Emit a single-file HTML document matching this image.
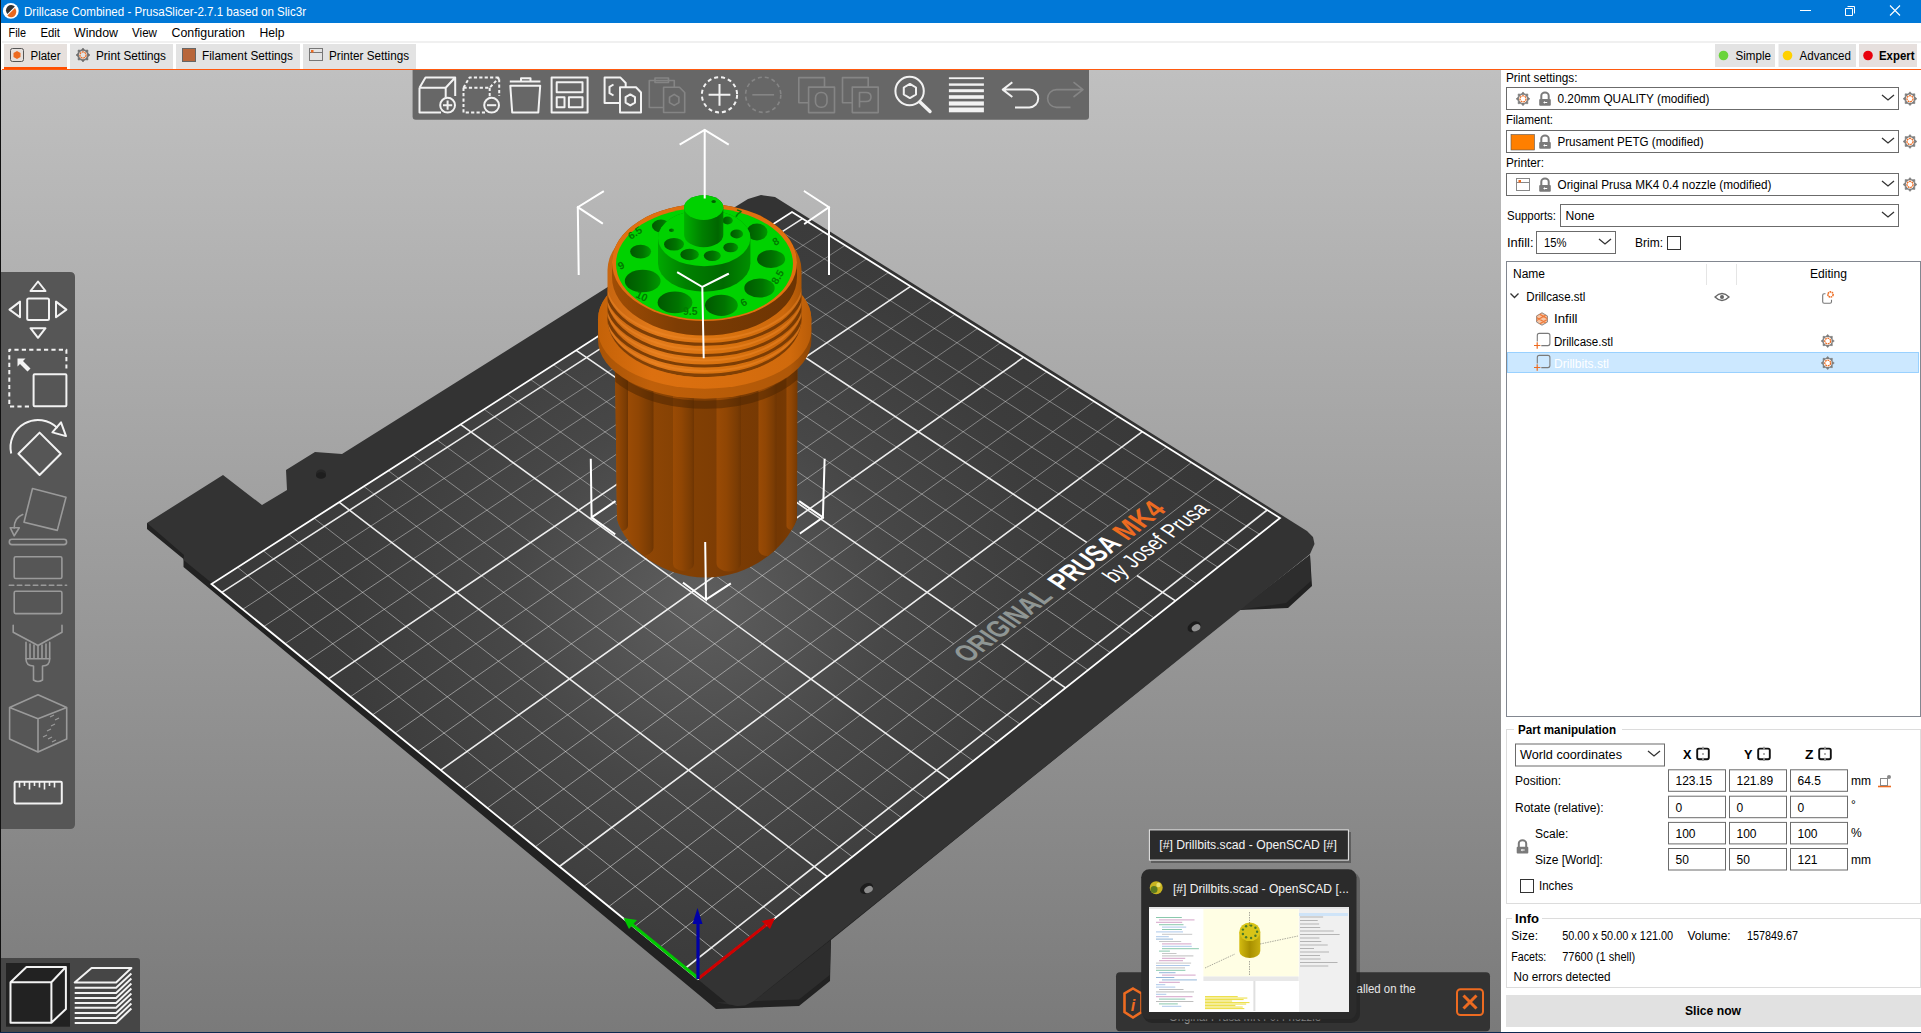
<!DOCTYPE html>
<html><head><meta charset="utf-8"><title>PrusaSlicer</title>
<style>html,body{margin:0;padding:0;overflow:hidden;background:#fff;width:1921px;height:1033px}
svg{display:block;font-family:"Liberation Sans", sans-serif}</style></head>
<body><svg width="1921" height="1033" viewBox="0 0 1921 1033">
<defs><linearGradient id="bgg" x1="0" y1="0" x2="0" y2="1"><stop offset="0" stop-color="#c0c0c0"/><stop offset="1" stop-color="#7a7a7a"/></linearGradient></defs><rect x="0" y="70" width="1501" height="962" fill="url(#bgg)"/>
<polygon points="147.0,523.0 147.0,529.0 183.5,559.0 183.5,567.0 716.0,1009.0 799.0,1006.0 830.0,981.0 831.0,940.0 1239.0,610.0 1288.0,608.0 1312.0,586.0 1310.0,555.0 1200.0,640.0" fill="#222"/>
<polygon points="738.0,1006.0 716.0,1002.5 799.0,999.5 829.7,975.0 830.7,940.0 754.0,1001.0" fill="#2d2d2d"/>
<polygon points="1239.0,610.0 1286.0,603.0 1311.0,581.0 1310.0,555.0" fill="#2d2d2d"/>
<polygon points="147.0,523.0 223.0,475.0 262.0,505.0 287.0,490.0 286.0,470.0 315.0,452.0 342.0,454.0 735.0,207.0 748.0,199.0 761.0,195.0 775.0,197.0 1307.0,531.0 1313.0,537.0 1314.5,544.0 1310.0,554.0 754.0,1001.0 745.0,1005.5 737.0,1006.0 728.0,1004.0 183.5,560.0 184.0,555.0" fill="#333"/>
<ellipse cx="321" cy="473.5" rx="5" ry="4" fill="#262626"/><ellipse cx="321" cy="475.5" rx="5" ry="3.2" fill="#1e1e1e"/>
<ellipse cx="866.5" cy="888.5" rx="7" ry="4.8" transform="rotate(-30 866.5 888.5)" fill="#1c1c1c"/><ellipse cx="868.5" cy="889.5" rx="4.6" ry="3.2" transform="rotate(-30 868.5 889.5)" fill="#8c8c8c"/>
<ellipse cx="1194" cy="626.8" rx="7" ry="4.8" transform="rotate(-30 1194 626.8)" fill="#1c1c1c"/><ellipse cx="1196" cy="627.8" rx="4.6" ry="3.2" transform="rotate(-30 1196 627.8)" fill="#929292"/>
<defs><radialGradient id="sheet" gradientUnits="userSpaceOnUse" cx="700" cy="600" r="640"><stop offset="0" stop-color="#5e5e5e"/><stop offset="0.12" stop-color="#555555"/><stop offset="0.3" stop-color="#474747"/><stop offset="0.55" stop-color="#3c3c3c"/><stop offset="1" stop-color="#353535"/></radialGradient></defs>
<polygon points="698.0,979.0 1280.0,518.0 792.0,212.0 211.5,584.0" fill="url(#sheet)"/>
<defs><linearGradient id="thinG" gradientUnits="userSpaceOnUse" x1="0" y1="200" x2="0" y2="980"><stop offset="0" stop-color="#fff" stop-opacity="0.3"/><stop offset="0.5" stop-color="#fff" stop-opacity="0.42"/><stop offset="1" stop-color="#fff" stop-opacity="0.5"/></linearGradient></defs>
<path d="M724.4 958.1L237.5 567.3M750.6 937.3L263.3 550.8M776.4 916.9L288.8 534.5M802.0 896.6L314.1 518.3M852.3 856.8L363.8 486.4M877.0 837.2L388.4 470.7M901.5 817.8L412.7 455.1M925.7 798.7L436.7 439.7M973.3 760.9L484.1 409.3M996.7 742.4L507.5 394.3M1019.9 724.0L530.6 379.5M1042.8 705.9L978.8 661.3M953.7 643.8L553.5 364.8M1088.0 670.1L1024.1 626.4M999.0 609.3L598.7 335.9M1110.2 652.5L1046.3 609.3M1021.2 592.3L621.0 321.6M1132.2 635.1L1068.3 592.3M1043.3 575.5L643.1 307.4M1154.0 617.8L1115.5 592.3M1065.1 558.9L664.9 293.4M1196.8 583.9L1158.4 558.9M1108.1 526.1L708.1 265.8M1217.9 567.2L1179.5 542.4M1129.3 510.0L729.3 252.2M1238.8 550.6L1200.5 526.1M1150.2 494.0L750.4 238.7M1259.5 534.2L771.3 225.3M659.3 947.6L1241.7 494.0M633.9 927.0L1216.5 478.2M608.8 906.6L1191.5 462.5M584.0 886.4L1166.8 447.0M535.2 846.8L1118.2 416.5M511.2 827.3L1094.2 401.5M487.4 808.0L1070.4 386.6M464.0 789.0L1046.9 371.8M417.8 751.5L1000.5 342.8M395.1 733.0L977.7 328.4M372.6 714.8L955.1 314.3M350.4 696.7L932.7 300.2M306.6 661.2L888.5 272.5M285.1 643.7L866.7 258.8M263.8 626.5L845.1 245.3M242.7 609.3L823.7 231.9" stroke="url(#thinG)" stroke-width="1" fill="none"/>
<path d="M827.3 876.6L339.1 502.2M949.6 779.7L460.5 424.4M1065.5 687.9L1001.6 643.8M976.5 626.4L576.2 350.3M1175.5 600.8L1137.0 575.5M1086.7 542.4L686.6 279.5M685.0 968.5L1267.2 510.0M559.4 866.5L1142.4 431.7M440.7 770.1L1023.6 357.2M328.4 678.9L910.5 286.3M221.8 592.4L802.5 218.6" stroke="#fff" stroke-opacity="0.9" stroke-width="1.6" fill="none"/>
<polygon points="698.0,979.0 1280.0,518.0 792.0,212.0 211.5,584.0" fill="none" stroke="#fff" stroke-width="1.8"/>
<g transform="matrix(2.1798 -1.6793 2.5184 1.6787 1079.27 583.90)" font-family="&quot;Liberation Sans&quot;, sans-serif">
<text x="-49.19999999999999" y="-1.6000000000000014" font-size="9.6" font-weight="bold" fill="#8f9694" textLength="39.5" lengthAdjust="spacingAndGlyphs">ORIGINAL</text>
<text x="-6" y="-1.6000000000000014" font-size="9.6" font-weight="bold" fill="#fff" textLength="27.8" lengthAdjust="spacingAndGlyphs">PRUSA</text>
<text x="23.80000000000001" y="-1.6000000000000014" font-size="9.6" font-weight="bold" fill="#ed6b21" textLength="18.4" lengthAdjust="spacingAndGlyphs">MK4</text>
<text x="7.599999999999994" y="7.399999999999999" font-size="7.9" fill="#fff" textLength="44" lengthAdjust="spacingAndGlyphs">by Josef Prusa</text>
</g>
<defs>
<linearGradient id="gBody" gradientUnits="userSpaceOnUse" x1="614" y1="0" x2="798" y2="0"><stop offset="0" stop-color="#a35106"/><stop offset="0.12" stop-color="#934805"/><stop offset="0.35" stop-color="#844104"/><stop offset="0.6" stop-color="#7c3c04"/><stop offset="0.9" stop-color="#743803"/><stop offset="1" stop-color="#7c3c04"/></linearGradient>
<linearGradient id="gFlute" x1="0" y1="0" x2="1" y2="0"><stop offset="0" stop-color="#9a4b05"/><stop offset="0.4" stop-color="#904604"/><stop offset="0.85" stop-color="#7a3c04"/><stop offset="1" stop-color="#6e3503"/></linearGradient>
<linearGradient id="gCollar" gradientUnits="userSpaceOnUse" x1="598" y1="0" x2="812" y2="0"><stop offset="0" stop-color="#c46208"/><stop offset="0.25" stop-color="#dc7010"/><stop offset="0.6" stop-color="#d86e0e"/><stop offset="0.9" stop-color="#d06a0c"/><stop offset="1" stop-color="#b85c08"/></linearGradient>
<linearGradient id="gCollarS" gradientUnits="userSpaceOnUse" x1="598" y1="0" x2="812" y2="0"><stop offset="0" stop-color="#a85306"/><stop offset="0.25" stop-color="#c0600a"/><stop offset="0.6" stop-color="#b85c08"/><stop offset="0.9" stop-color="#b05808"/><stop offset="1" stop-color="#8a4405"/></linearGradient>
<linearGradient id="gThread" gradientUnits="userSpaceOnUse" x1="607" y1="0" x2="803" y2="0"><stop offset="0" stop-color="#c86610"/><stop offset="0.25" stop-color="#e27a1a"/><stop offset="0.6" stop-color="#d9730f"/><stop offset="0.9" stop-color="#cc680c"/><stop offset="1" stop-color="#a85406"/></linearGradient>
<linearGradient id="gWall" gradientUnits="userSpaceOnUse" x1="612" y1="0" x2="797" y2="0"><stop offset="0" stop-color="#a04d05"/><stop offset="0.35" stop-color="#7e3d04"/><stop offset="1" stop-color="#6c3403"/></linearGradient>
<linearGradient id="gHub" gradientUnits="userSpaceOnUse" x1="658" y1="0" x2="751" y2="0"><stop offset="0" stop-color="#00a800"/><stop offset="0.3" stop-color="#008000"/><stop offset="0.7" stop-color="#006a00"/><stop offset="1" stop-color="#009000"/></linearGradient>
<linearGradient id="gPin" gradientUnits="userSpaceOnUse" x1="684" y1="0" x2="724" y2="0"><stop offset="0" stop-color="#00b000"/><stop offset="0.45" stop-color="#008000"/><stop offset="0.85" stop-color="#006600"/><stop offset="1" stop-color="#008000"/></linearGradient>
<linearGradient id="gHoleB" x1="0" y1="0" x2="1" y2="0"><stop offset="0" stop-color="#005800"/><stop offset="0.6" stop-color="#007400"/><stop offset="1" stop-color="#009a00"/></linearGradient>
<clipPath id="cThread"><path d="M607.5 270.0 L607.5 319.3 A97 58 0 0 0 801.5 319.3 L801.5 270.0 A97 58 0 0 0 607.5 270.0 Z"/></clipPath>
<clipPath id="cBody"><path d="M614.7 330 L617 519 C625 548 662 577.5 705.5 577.5 C750 577.5 786 548 797 519 L797.4 330 Z"/></clipPath>
</defs>
<path d="M614.7 330 L617 519 C625 548 662 577.5 705.5 577.5 C750 577.5 786 548 797 519 L797.4 330 Z" fill="url(#gBody)"/>
<g clip-path="url(#cBody)">
<rect x="613" y="300" width="15" height="231" rx="7.5" ry="5.2" fill="url(#gFlute)"/>
<rect x="628.5" y="300" width="25.0" height="256" rx="12.5" ry="8.8" fill="url(#gFlute)"/>
<rect x="673" y="300" width="21" height="271" rx="10.5" ry="7.3" fill="url(#gFlute)"/>
<rect x="716.5" y="300" width="24.5" height="271.5" rx="12.2" ry="8.6" fill="url(#gFlute)"/>
<rect x="758.5" y="300" width="18.0" height="256" rx="9.0" ry="6.3" fill="url(#gFlute)"/>
<rect x="786.5" y="300" width="11.5" height="230" rx="5.8" ry="4.0" fill="url(#gFlute)"/>
</g>
<g clip-path="url(#cBody)"><path d="M600 346 A105 58.7 0 0 0 810 346" stroke="#4a2402" stroke-width="8" fill="none" stroke-opacity="0.5"/></g>
<path d="M598.0 330.0 L598.0 340.0 A106.7 58.7 0 0 0 811.4 340.0 L811.4 330.0 A106.7 58.7 0 0 0 598.0 330.0 Z" fill="url(#gCollarS)"/>
<path d="M598.0 319.3 L598.0 330.0 A106.7 58.7 0 0 0 811.4 330.0 L811.4 319.3 A106.7 58.7 0 0 0 598.0 319.3 Z" fill="url(#gCollar)"/>
<ellipse cx="704.7" cy="319.3" rx="106.7" ry="58.7" fill="url(#gCollar)"/>
<path d="M607.5 270.0 L607.5 319.3 A97 58 0 0 0 801.5 319.3 L801.5 270.0 A97 58 0 0 0 607.5 270.0 Z" fill="url(#gThread)"/>
<g clip-path="url(#cThread)" fill="none">
<path d="M605.5 317.5 A99 58 0 0 0 803.5 317.5" stroke="#6a3303" stroke-width="3.6" stroke-opacity="0.8"/>
<path d="M605.5 286.4 A99 58 0 0 0 803.5 286.4" stroke="#723703" stroke-width="3" stroke-opacity="0.9"/>
<path d="M605.5 297.5 A99 58 0 0 0 803.5 297.5" stroke="#723703" stroke-width="3" stroke-opacity="0.9"/>
<path d="M605.5 308.0 A99 58 0 0 0 803.5 308.0" stroke="#723703" stroke-width="3" stroke-opacity="0.9"/>
<path d="M605.5 281.5 A99 58 0 0 0 803.5 281.5" stroke="#f08a2a" stroke-width="2" stroke-opacity="0.45"/>
<path d="M605.5 292.0 A99 58 0 0 0 803.5 292.0" stroke="#f08a2a" stroke-width="2" stroke-opacity="0.45"/>
<path d="M605.5 302.5 A99 58 0 0 0 803.5 302.5" stroke="#f08a2a" stroke-width="2" stroke-opacity="0.45"/>
<path d="M605.5 313.0 A99 58 0 0 0 803.5 313.0" stroke="#f08a2a" stroke-width="2" stroke-opacity="0.45"/>
</g>
<path d="M612.0 262.5 L612.0 277.0 A92.5 58.5 0 0 0 797.0 277.0 L797.0 262.5 A92.5 58.5 0 0 0 612.0 262.5 Z" fill="url(#gWall)"/>
<ellipse cx="704.5" cy="262.5" rx="92.5" ry="58.5" fill="#e07010"/>
<ellipse cx="704.5" cy="263.8" rx="88.5" ry="55.8" fill="#00d200"/>
<ellipse cx="640.6" cy="251.6" rx="10.5" ry="6.8" fill="url(#gHoleB)"/>
<ellipse cx="642.7" cy="281" rx="17.9" ry="11.3" fill="url(#gHoleB)"/>
<ellipse cx="675" cy="302.4" rx="17.4" ry="10.9" fill="url(#gHoleB)"/>
<ellipse cx="721.4" cy="305.3" rx="16.4" ry="10.6" fill="url(#gHoleB)"/>
<ellipse cx="759.5" cy="288" rx="15.2" ry="9.6" fill="url(#gHoleB)"/>
<ellipse cx="771.1" cy="259" rx="14.1" ry="9" fill="url(#gHoleB)"/>
<ellipse cx="757" cy="232" rx="10.5" ry="8.5" fill="url(#gHoleB)"/>
<ellipse cx="661" cy="226" rx="9" ry="6.5" fill="url(#gHoleB)"/>
<ellipse cx="712" cy="215" rx="8" ry="5" fill="url(#gHoleB)"/>
<path d="M658.0 238.0 L658.0 263.5 A46.2 28.2 0 0 0 750.4 263.5 L750.4 238.0 A46.2 28.2 0 0 0 658.0 238.0 Z" fill="url(#gHub)"/>
<ellipse cx="704.2" cy="238" rx="46.2" ry="28.2" fill="#00d200"/>
<ellipse cx="674" cy="244.3" rx="10" ry="6.3" fill="url(#gHoleB)"/>
<ellipse cx="689.6" cy="254.5" rx="9.3" ry="5.7" fill="url(#gHoleB)"/>
<ellipse cx="712.3" cy="255.8" rx="8.5" ry="5.2" fill="url(#gHoleB)"/>
<ellipse cx="730.7" cy="247.5" rx="7.4" ry="4.8" fill="url(#gHoleB)"/>
<ellipse cx="736.7" cy="233.9" rx="6.4" ry="4.5" fill="url(#gHoleB)"/>
<ellipse cx="727.6" cy="220.5" rx="5.2" ry="3.9" fill="url(#gHoleB)"/>
<ellipse cx="671.6" cy="230.2" rx="2.6" ry="1.8" fill="url(#gHoleB)"/>
<path d="M684.1 207.6 L684.1 234.8 A19.6 12.4 0 0 0 723.3 234.8 L723.3 207.6 A19.6 12.4 0 0 0 684.1 207.6 Z" fill="url(#gPin)"/>
<ellipse cx="703.7" cy="207.6" rx="19.6" ry="12.4" fill="#00d200"/>
<ellipse cx="713.7" cy="201.5" rx="2.2" ry="1.5" fill="#006000"/>
<g font-size="10.5" font-weight="bold" fill="#007a00"><text x="631" y="240" transform="rotate(-35 631 240)">6.5</text><text x="620" y="270" transform="rotate(-25 620 270)">9</text><text x="635" y="297" transform="rotate(25 635 297)">10</text><text x="683" y="315">9.5</text><text x="743" y="307" transform="rotate(-30 743 307)">6</text><text x="777" y="285" transform="rotate(-60 777 285)">8.5</text><text x="775" y="246" transform="rotate(-30 775 246)">8</text><text x="734" y="216" transform="rotate(20 734 216)">7</text></g>
<path d="M704.7 197.5V130 M680.5 144.2L704.7 130L727.9 144.2 M578.7 274L577.8 207.2L603 191.7 M577.8 207.2L602 223.2 M829 274V207.2L804.8 191.5 M829 207.2L805 223.5 M703.7 357.3L702.3 287L678 272.6 M702.3 287L728 274 M590.8 459.8L591.6 517.4L614.7 501.7 M591.6 517.4L614.4 533.8 M824.6 459.8L822.9 517.4L799.9 501.7 M822.9 517.4L800.7 533 M705.2 542.9L706 599.7L683.8 583.2 M706 599.7L730 584" stroke="#fff" stroke-width="2" fill="none" stroke-linecap="square"/>
<path d="M698.5 978.5L632 924.5" stroke="#00c800" stroke-width="3"/><polygon points="623.5,918 637,920 629,929" fill="#00c800"/>
<path d="M698.5 978.5L766 925" stroke="#d00000" stroke-width="3"/><polygon points="775,918 770,929 761.5,921" fill="#d00000"/>
<path d="M698 979V920" stroke="#0000a8" stroke-width="3.2"/><polygon points="697.5,908 702.5,924 692.5,924" fill="#0000a8"/>
<path d="M412.6 70 H1089 V116.5 Q1089 119.7 1085.8 119.7 H415.8 Q412.6 119.7 412.6 116.5 Z" fill="#676767"/>
<path d="M419.5 87.7 V112.5 H441 M419.5 87.7 L425.5 77.5 H455.2 V96 M419.5 87.7 H445.7 L455.2 77.5 M445.7 87.7 V97" fill="none" stroke="#f2f2f2" stroke-width="2" stroke-linejoin="round"/>
<circle cx="447.6" cy="105.2" r="7.4" fill="none" stroke="#f2f2f2" stroke-width="2" stroke-linejoin="round"/><path d="M443 105.2h9.2 M447.6 100.6v9.2" fill="none" stroke="#f2f2f2" stroke-width="2" stroke-linejoin="round"/>
<path d="M463.5 87.7 V112.5 H485 M463.5 87.7 L469.5 77.5 H499.2 V96 M463.5 87.7 H489.7 L499.2 77.5 M489.7 87.7 V97" fill="none" stroke="#f2f2f2" stroke-width="2" stroke-linejoin="round" stroke-dasharray="3.2 2.2"/>
<circle cx="491.6" cy="105.2" r="7.4" fill="none" stroke="#f2f2f2" stroke-width="2" stroke-linejoin="round"/><path d="M487 105.2h9.2" fill="none" stroke="#f2f2f2" stroke-width="2" stroke-linejoin="round"/>
<path d="M510.3 85.7 L512.2 112.5 H538.3 L540.2 85.7 Z M509.8 81.5 H540.4 M521 81 V78.3 H530.5 V81" fill="none" stroke="#f2f2f2" stroke-width="2" stroke-linejoin="round"/>
<rect x="551.6" y="77.6" width="36" height="34.8" fill="none" stroke="#f2f2f2" stroke-width="2" stroke-linejoin="round"/><rect x="556.7" y="82.3" width="25.8" height="10" fill="none" stroke="#f2f2f2" stroke-width="2" stroke-linejoin="round"/><rect x="556.7" y="97.3" width="7.8" height="10" fill="none" stroke="#f2f2f2" stroke-width="2" stroke-linejoin="round"/><rect x="568.9" y="97.3" width="13.6" height="10" fill="none" stroke="#f2f2f2" stroke-width="2" stroke-linejoin="round"/>
<path d="M620 103 H604.6 V77.6 H620.5 L625.7 83 V88" fill="none" stroke="#f2f2f2" stroke-width="2" stroke-linejoin="round"/><path d="M620 87.2 H636 L641 92.5 V112.5 H620 Z" fill="none" stroke="#f2f2f2" stroke-width="2" stroke-linejoin="round"/><path d="M613.5 84.5 L609.5 86.8 V93.2 L613.5 95.5" fill="none" stroke="#f2f2f2" stroke-width="2" stroke-linejoin="round"/><polygon points="630.3,94.4 635,97.2 635,102.6 630.3,105.4 625.6,102.6 625.6,97.2" fill="none" stroke="#f2f2f2" stroke-width="2" stroke-linejoin="round"/>
<path d="M663.5 107.5 H649.3 V80.5 H674.3 V87 M655 78 H668.5 V82.5 H655 Z" fill="none" stroke="#858585" stroke-width="1.6" stroke-linejoin="round"/><path d="M663.6 87.2 H679.5 L684.7 92.5 V112.5 H663.6 Z" fill="none" stroke="#858585" stroke-width="1.6" stroke-linejoin="round"/><polygon points="674.2,94.4 678.9,97.2 678.9,102.6 674.2,105.4 669.5,102.6 669.5,97.2" fill="none" stroke="#858585" stroke-width="1.6" stroke-linejoin="round"/>
<circle cx="719.5" cy="94.8" r="17.6" fill="none" stroke="#f2f2f2" stroke-width="2" stroke-linejoin="round" stroke-dasharray="4 3"/><path d="M708.6 94.8h21.8 M719.5 83.9v21.8" fill="none" stroke="#f2f2f2" stroke-width="2" stroke-linejoin="round"/>
<circle cx="763.2" cy="94.8" r="17.6" fill="none" stroke="#858585" stroke-width="1.6" stroke-linejoin="round" stroke-dasharray="4 3"/><path d="M752.3 94.8h21.8" fill="none" stroke="#858585" stroke-width="1.6" stroke-linejoin="round"/>
<path d="M808.5999999999999 102.8 H798.8 V77.6 H824.5 V87" fill="none" stroke="#858585" stroke-width="1.6" stroke-linejoin="round"/><rect x="808.5999999999999" y="87.1" width="25.9" height="25.5" fill="none" stroke="#858585" stroke-width="1.6" stroke-linejoin="round"/>
<path d="M852.3 102.8 H842.5 V77.6 H868.2 V87" fill="none" stroke="#858585" stroke-width="1.6" stroke-linejoin="round"/><rect x="852.3" y="87.1" width="25.9" height="25.5" fill="none" stroke="#858585" stroke-width="1.6" stroke-linejoin="round"/>
<rect x="815.5" y="92.5" width="11.5" height="14.8" rx="5.2" fill="none" stroke="#858585" stroke-width="1.6" stroke-linejoin="round"/>
<path d="M859.5 107.5 V92.5 H866 Q871 92.5 871 97 Q871 101.5 866 101.5 H859.5" fill="none" stroke="#858585" stroke-width="1.6" stroke-linejoin="round"/>
<circle cx="909.6" cy="91" r="14.2" fill="none" stroke="#f2f2f2" stroke-width="2" stroke-linejoin="round"/><polygon points="909.9,83.9 916,87.5 916,94.5 909.9,98.1 903.8,94.5 903.8,87.5" fill="none" stroke="#f2f2f2" stroke-width="2" stroke-linejoin="round"/><path d="M920 101.9 L930 111.5" stroke="#f2f2f2" stroke-width="3.4" stroke-linecap="round"/>
<rect x="948.9" y="77.30" width="35" height="1.8" fill="#f2f2f2"/>
<rect x="948.9" y="83.40" width="35" height="2.4" fill="#f2f2f2"/>
<rect x="948.9" y="89.20" width="35" height="3" fill="#f2f2f2"/>
<rect x="948.9" y="95.20" width="35" height="3.6" fill="#f2f2f2"/>
<rect x="948.9" y="101.40" width="35" height="4.2" fill="#f2f2f2"/>
<rect x="948.9" y="107.50" width="35" height="4.8" fill="#f2f2f2"/>
<path d="M1012.3 82.2 L1002.8 89.6 L1012.3 97 M1002.8 89.6 H1029.3 A8.9 8.9 0 0 1 1029.3 107.4 H1015" fill="none" stroke="#f2f2f2" stroke-width="2" stroke-linejoin="round"/>
<path d="M1073.5 82.2 L1083 89.6 L1073.5 97 M1083 89.6 H1056.5 A8.9 8.9 0 0 0 1056.5 107.4 H1070.5" fill="none" stroke="#858585" stroke-width="1.6" stroke-linejoin="round"/>
<path d="M1 272 H70 Q75 272 75 277 V824 Q75 829 70 829 H1 Z" fill="#565656"/>
<polygon points="38,281.5 45.5,291 30.5,291" fill="none" stroke="#f2f2f2" stroke-width="2" stroke-linejoin="round"/><polygon points="38,337.8 45.5,328.2 30.5,328.2" fill="none" stroke="#f2f2f2" stroke-width="2" stroke-linejoin="round"/><polygon points="9.5,309.6 20,301.6 20,317.2" fill="none" stroke="#f2f2f2" stroke-width="2" stroke-linejoin="round"/><polygon points="66.4,309.6 56,301.6 56,317.2" fill="none" stroke="#f2f2f2" stroke-width="2" stroke-linejoin="round"/><rect x="27.2" y="298.6" width="21.8" height="21.4" rx="1.5" fill="none" stroke="#f2f2f2" stroke-width="2" stroke-linejoin="round"/>
<path d="M29 406.4 H9.3 V349.8 H66.4 V369" fill="none" stroke="#f2f2f2" stroke-width="2" stroke-linejoin="round" stroke-dasharray="4.2 3.2"/><rect x="33.6" y="374.3" width="32.8" height="32" rx="1" fill="none" stroke="#f2f2f2" stroke-width="2" stroke-linejoin="round"/><path d="M17.5 358.5 H25.5 L23 361 L30.5 368.5 L27.5 371.5 L20 364 L17.5 366.5 Z" fill="#f2f2f2"/>
<polygon points="39.6,432.6 60.8,453.8 39.6,475 18.4,453.8" fill="none" stroke="#f2f2f2" stroke-width="2" stroke-linejoin="round"/><path d="M11.2 453.5 A27.5 27.5 0 0 1 57.5 428" fill="none" stroke="#f2f2f2" stroke-width="2" stroke-linejoin="round"/><polygon points="61,422.3 66,436.1 52.4,432.4" fill="none" stroke="#f2f2f2" stroke-width="2" stroke-linejoin="round"/>
<polygon points="32.5,488.5 66,497.3 57.3,530.4 24,522.2" fill="none" stroke="#9a9a9a" stroke-width="1.6" stroke-linejoin="round" stroke-linecap="round"/><path d="M22.7 514.5 Q14 518 14.2 528" fill="none" stroke="#9a9a9a" stroke-width="1.6" stroke-linejoin="round" stroke-linecap="round"/><polygon points="10.2,527.7 19.3,527.7 14.2,535.8" fill="none" stroke="#9a9a9a" stroke-width="1.6" stroke-linejoin="round" stroke-linecap="round"/><rect x="9.3" y="539.3" width="57.3" height="5.3" rx="2.6" fill="none" stroke="#9a9a9a" stroke-width="1.6" stroke-linejoin="round" stroke-linecap="round"/>
<rect x="14.2" y="556.8" width="47.7" height="21.7" rx="1.5" fill="none" stroke="#9a9a9a" stroke-width="1.6" stroke-linejoin="round" stroke-linecap="round"/><path d="M9.3 585.2 H66.6" fill="none" stroke="#9a9a9a" stroke-width="1.6" stroke-linejoin="round" stroke-linecap="round" stroke-dasharray="4.5 3.5"/><rect x="14.2" y="591.3" width="47.7" height="22.3" rx="1.5" fill="none" stroke="#9a9a9a" stroke-width="1.6" stroke-linejoin="round" stroke-linecap="round"/>
<path d="M13.2 625.2 V632.3 L38 645.5 L62 632.3 V625.2" fill="none" stroke="#9a9a9a" stroke-width="1.6" stroke-linejoin="round" stroke-linecap="round"/><path d="M26 642.4 V658.7 H49.7 V642.4 M30 644 V658 M34 645 V658 M38 646 V658 M42 645 V658 M46 644 V658" fill="none" stroke="#9a9a9a" stroke-width="1.6" stroke-linejoin="round" stroke-linecap="round"/><path d="M26 658.7 Q26 666 33.5 666 V680 Q38 683 42.5 680 V666 Q49.7 666 49.7 658.7" fill="none" stroke="#9a9a9a" stroke-width="1.6" stroke-linejoin="round" stroke-linecap="round"/>
<path d="M38 694.7 L66.7 707.6 V738.9 L38 752.1 L9.6 738.9 V707.6 Z M9.6 707.6 L38 718.8 L66.7 707.6 M38 718.8 V752.1" fill="none" stroke="#9a9a9a" stroke-width="1.6" stroke-linejoin="round" stroke-linecap="round"/><path d="M50 717 l4 -2 M55 720 l4 -2 M51 726 l4 -2 M47 731 l4 -2 M43 737 l4 -2 M48 739 l4 -2 M52 742 l4 -2" stroke="#9a9a9a" stroke-width="1.2"/>
<rect x="14.6" y="781.8" width="47.2" height="21.8" rx="1" fill="none" stroke="#f2f2f2" stroke-width="2" stroke-linejoin="round"/><path d="M19.5 782v5.5 M24.5 782v4 M29.5 782v7.5 M34.5 782v4 M39.5 782v5.5 M44.5 782v7.5 M49.5 782v4 M54.5 782v5.5" stroke="#f2f2f2" stroke-width="1.6"/>
<path d="M1 958 H137 Q140 958 140 961 V1032 H1 Z" fill="#464646"/>
<rect x="6" y="963" width="64" height="63.7" fill="#222"/>
<path d="M10.5 982.2 H51.4 V1022.7 H10.5 Z M10.5 982.2 L26.5 967 H65.9 V1009 L51.4 1022.7 M51.4 982.2 L65.9 967" fill="none" stroke="#f2f2f2" stroke-width="2" stroke-linejoin="round"/>
<path d="M74.7 982.5 L91.6 968.1 H131.4 L116.1 982.5 Z" fill="none" stroke="#f2f2f2" stroke-width="2" stroke-linejoin="round"/>
<path d="M74.7 987.8 H116.1 L131.4 973.4 M74.7 993 H116.1 L131.4 978.6 M74.7 998 H116.1 L131.4 983.6 M74.7 1003 H116.1 L131.4 988.6 M74.7 1007.8 H116.1 L131.4 993.4 M74.7 1012.9 H116.1 L131.4 998.5 M74.7 1017.9 H116.1 L131.4 1003.5 M74.7 1023 H116.1 L131.4 1008.6 " fill="none" stroke="#f2f2f2" stroke-width="2" stroke-linejoin="round"/>
<rect x="1116" y="972.2" width="374" height="59" rx="4" fill="#333"/>
<polygon points="1133,988.5 1141.5,993.5 1141.5,1012 1133,1017.5 1124.5,1012 1124.5,993.5" fill="none" stroke="#ed6b21" stroke-width="2.6"/><text x="1133" y="1011" font-size="16" font-weight="bold" font-style="italic" fill="#ed6b21" text-anchor="middle">i</text>
<text x="1356.6" y="993" font-size="13" fill="#e6e6e6" font-weight="normal" text-anchor="start" textLength="59" lengthAdjust="spacingAndGlyphs" >alled on the</text>
<text x="1169" y="1021" font-size="13" fill="#a8a8a8" font-weight="normal" text-anchor="start" textLength="152" lengthAdjust="spacingAndGlyphs" >Original Prusa MK4 0.4 nozzle</text>
<rect x="1457" y="989.2" width="26" height="25.8" rx="3.5" fill="none" stroke="#ed6b21" stroke-width="2"/><path d="M1463.5 995.5l13 13 M1476.5 995.5l-13 13" stroke="#ed6b21" stroke-width="3"/>
<rect x="1143" y="872" width="217" height="151" rx="9" fill="#000" opacity="0.25"/>
<rect x="1141.2" y="869.3" width="215.3" height="150" rx="8" fill="#2b2b2b"/>
<circle cx="1156.2" cy="887.7" r="6.5" fill="#c8b420"/><circle cx="1154" cy="889.5" r="3.5" fill="#5a7a20"/><circle cx="1158.5" cy="885" r="2.2" fill="#e8e070"/>
<text x="1172.9" y="892.5" font-size="12" fill="#f4f4f4" font-weight="normal" text-anchor="start" textLength="176" lengthAdjust="spacingAndGlyphs" >[#] Drillbits.scad - OpenSCAD [...</text>
<rect x="1149" y="907" width="200" height="105" fill="#fff"/>
<rect x="1149" y="907" width="200" height="2" fill="#e6e6e6"/>
<rect x="1203.4" y="909" width="95.3" height="67.5" fill="#fffee4"/>
<rect x="1203.4" y="976.5" width="95.3" height="4.5" fill="#e8e8e8"/>
<rect x="1299" y="909" width="50" height="103" fill="#f0f0f0"/>
<rect x="1253.4" y="981" width="2" height="30" fill="#e0e0e0"/>
<rect x="1156.0" y="917.0" width="25.8" height="1" fill="#2a9a6a" opacity="0.55"/><rect x="1159.0" y="919.4" width="35.5" height="1" fill="#b05a9a" opacity="0.55"/><rect x="1156.0" y="921.8" width="26.2" height="1" fill="#b05a9a" opacity="0.55"/><rect x="1159.0" y="924.2" width="24.5" height="1" fill="#2a9a6a" opacity="0.55"/><rect x="1162.0" y="926.6" width="24.2" height="1" fill="#6a9ad8" opacity="0.55"/><rect x="1162.0" y="929.0" width="19.9" height="1" fill="#2a9a6a" opacity="0.55"/><rect x="1156.0" y="931.4" width="27.0" height="1" fill="#6a9ad8" opacity="0.55"/><rect x="1162.0" y="933.8" width="30.2" height="1" fill="#999" opacity="0.55"/><rect x="1156.0" y="936.2" width="12.8" height="1" fill="#6a9ad8" opacity="0.55"/><rect x="1156.0" y="938.6" width="17.0" height="1" fill="#3a7ab8" opacity="0.55"/><rect x="1159.0" y="941.0" width="22.2" height="1" fill="#999" opacity="0.55"/><rect x="1162.0" y="943.4" width="29.4" height="1" fill="#b05a9a" opacity="0.55"/><rect x="1162.0" y="945.8" width="29.8" height="1" fill="#6a9ad8" opacity="0.55"/><rect x="1162.0" y="948.2" width="36.9" height="1" fill="#2a9a6a" opacity="0.55"/><rect x="1159.0" y="950.6" width="10.9" height="1" fill="#2a9a6a" opacity="0.55"/><rect x="1162.0" y="953.0" width="14.5" height="1" fill="#999" opacity="0.55"/><rect x="1162.0" y="955.4" width="31.4" height="1" fill="#888" opacity="0.55"/><rect x="1162.0" y="957.8" width="23.2" height="1" fill="#b05a9a" opacity="0.55"/><rect x="1159.0" y="960.2" width="24.0" height="1" fill="#b05a9a" opacity="0.55"/><rect x="1156.0" y="962.6" width="35.1" height="1" fill="#999" opacity="0.55"/><rect x="1156.0" y="965.0" width="33.7" height="1" fill="#6a9ad8" opacity="0.55"/><rect x="1156.0" y="967.4" width="29.0" height="1" fill="#888" opacity="0.55"/><rect x="1156.0" y="969.8" width="29.4" height="1" fill="#2a9a6a" opacity="0.55"/><rect x="1159.0" y="972.2" width="16.5" height="1" fill="#3a7ab8" opacity="0.55"/><rect x="1162.0" y="974.6" width="33.6" height="1" fill="#b05a9a" opacity="0.55"/><rect x="1156.0" y="977.0" width="18.3" height="1" fill="#3a7ab8" opacity="0.55"/><rect x="1162.0" y="979.4" width="34.9" height="1" fill="#3a7ab8" opacity="0.55"/><rect x="1159.0" y="981.8" width="20.8" height="1" fill="#b05a9a" opacity="0.55"/><rect x="1156.0" y="984.2" width="9.3" height="1" fill="#6a9ad8" opacity="0.55"/><rect x="1156.0" y="986.6" width="19.3" height="1" fill="#6a9ad8" opacity="0.55"/><rect x="1159.0" y="989.0" width="24.5" height="1" fill="#888" opacity="0.55"/><rect x="1156.0" y="991.4" width="38.0" height="1" fill="#888" opacity="0.55"/><rect x="1156.0" y="993.8" width="10.3" height="1" fill="#6a9ad8" opacity="0.55"/><rect x="1156.0" y="996.2" width="36.5" height="1" fill="#b05a9a" opacity="0.55"/><rect x="1159.0" y="998.6" width="26.3" height="1" fill="#2a9a6a" opacity="0.55"/><rect x="1156.0" y="1001.0" width="37.4" height="1" fill="#888" opacity="0.55"/><rect x="1159.0" y="1003.4" width="18.8" height="1" fill="#2a9a6a" opacity="0.55"/><rect x="1162.0" y="1005.8" width="19.3" height="1" fill="#6a9ad8" opacity="0.55"/>
<rect x="1205" y="996.0" width="32.7" height="1.1" fill="#e8d820" opacity="0.8"/>
<rect x="1205" y="997.5" width="42.3" height="1.1" fill="#e8d820" opacity="0.8"/>
<rect x="1205" y="999.0" width="38.6" height="1.1" fill="#e8d820" opacity="0.8"/>
<rect x="1205" y="1000.5" width="27.1" height="1.1" fill="#e8d820" opacity="0.8"/>
<rect x="1205" y="1002.0" width="44.5" height="1.1" fill="#e8d820" opacity="0.8"/>
<rect x="1205" y="1003.5" width="41.2" height="1.1" fill="#e8d820" opacity="0.8"/>
<rect x="1205" y="1005.0" width="30.4" height="1.1" fill="#e8d820" opacity="0.8"/>
<rect x="1205" y="1006.5" width="37.7" height="1.1" fill="#e8d820" opacity="0.8"/>
<rect x="1205" y="1008.0" width="39.3" height="1.1" fill="#e8d820" opacity="0.8"/>
<rect x="1300" y="913.0" width="38.1" height="1" fill="#777" opacity="0.5"/>
<rect x="1300" y="916.5" width="23.1" height="1" fill="#777" opacity="0.5"/>
<rect x="1300" y="920.0" width="17.7" height="1" fill="#777" opacity="0.5"/>
<rect x="1300" y="923.5" width="19.1" height="1" fill="#777" opacity="0.5"/>
<rect x="1300" y="927.0" width="20.2" height="1" fill="#777" opacity="0.5"/>
<rect x="1300" y="930.5" width="33.7" height="1" fill="#777" opacity="0.5"/>
<rect x="1300" y="934.0" width="39.6" height="1" fill="#777" opacity="0.5"/>
<rect x="1300" y="937.5" width="19.4" height="1" fill="#777" opacity="0.5"/>
<rect x="1300" y="941.0" width="21.3" height="1" fill="#777" opacity="0.5"/>
<rect x="1300" y="944.5" width="27.7" height="1" fill="#777" opacity="0.5"/>
<rect x="1300" y="948.0" width="14.0" height="1" fill="#777" opacity="0.5"/>
<rect x="1300" y="951.5" width="29.0" height="1" fill="#777" opacity="0.5"/>
<rect x="1300" y="955.0" width="20.0" height="1" fill="#777" opacity="0.5"/>
<rect x="1300" y="958.5" width="20.6" height="1" fill="#777" opacity="0.5"/>
<rect x="1300" y="962.0" width="37.5" height="1" fill="#777" opacity="0.5"/>
<rect x="1300" y="965.5" width="28.3" height="1" fill="#777" opacity="0.5"/>
<rect x="1299" y="913" width="49" height="3" fill="#cfe4f8"/>
<defs><linearGradient id="yc" x1="0" x2="1"><stop offset="0" stop-color="#d4bc10"/><stop offset="0.5" stop-color="#a88f00"/><stop offset="1" stop-color="#c8b010"/></linearGradient></defs>
<path d="M1239.3 932 V951 A10.5 7 0 0 0 1260.3 951 V932 Z" fill="url(#yc)"/>
<ellipse cx="1249.8" cy="931.8" rx="10.5" ry="9.3" fill="#d8c418"/>
<circle cx="1257.1" cy="931.8" r="1.2" fill="#4a7a2a"/>
<circle cx="1255.4" cy="935.8" r="1.2" fill="#4a7a2a"/>
<circle cx="1251.1" cy="938.0" r="1.2" fill="#4a7a2a"/>
<circle cx="1246.1" cy="937.3" r="1.2" fill="#4a7a2a"/>
<circle cx="1242.9" cy="934.0" r="1.2" fill="#4a7a2a"/>
<circle cx="1242.9" cy="929.6" r="1.2" fill="#4a7a2a"/>
<circle cx="1246.1" cy="926.3" r="1.2" fill="#4a7a2a"/>
<circle cx="1251.1" cy="925.6" r="1.2" fill="#4a7a2a"/>
<circle cx="1255.4" cy="927.8" r="1.2" fill="#4a7a2a"/>
<path d="M1249.5 912v14 M1249.5 961v14 M1260 944l38 -8 M1205 968l30 -14" stroke="#555" stroke-width="0.5" stroke-dasharray="1.5 1"/>
<rect x="1151" y="832" width="200" height="31" fill="#000" opacity="0.3"/>
<rect x="1149.4" y="829.9" width="199" height="30.2" fill="#2b2b2b" stroke="#e8e8e8" stroke-width="1"/>
<text x="1159.3" y="849" font-size="12" fill="#f4f4f4" font-weight="normal" text-anchor="start" textLength="177.5" lengthAdjust="spacingAndGlyphs" >[#] Drillbits.scad - OpenSCAD [#]</text>
<rect x="0" y="0" width="1921" height="23" fill="#0078d7"/>
<circle cx="10.8" cy="10.9" r="7.9" fill="#fff"/><path d="M7.4 14 A5 5.2 0 0 1 14.9 6.6 Z" fill="#333"/><path d="M7.3 15.5 L15 8 A4.6 5 0 0 1 7.3 15.5 Z" fill="#e8681f"/>
<text x="24" y="16" font-size="12.5" fill="#fff" font-weight="normal" text-anchor="start" textLength="282" lengthAdjust="spacingAndGlyphs" >Drillcase Combined - PrusaSlicer-2.7.1 based on Slic3r</text>
<rect x="1800" y="10" width="11" height="1" fill="#fff"/>
<path d="M1845.5 8.5h7v7h-7z M1847.5 6.5h7v7" fill="none" stroke="#fff" stroke-width="1"/>
<path d="M1890 5.5l10 10 M1900 5.5l-10 10" stroke="#fff" stroke-width="1.1"/>
<rect x="0" y="23" width="1921" height="18" fill="#fff"/>
<text x="8.5" y="36.8" font-size="12" fill="#000" font-weight="normal" text-anchor="start" textLength="17.5" lengthAdjust="spacingAndGlyphs" >File</text>
<text x="40.5" y="36.8" font-size="12" fill="#000" font-weight="normal" text-anchor="start" textLength="19.5" lengthAdjust="spacingAndGlyphs" >Edit</text>
<text x="74" y="36.8" font-size="12" fill="#000" font-weight="normal" text-anchor="start" textLength="44" lengthAdjust="spacingAndGlyphs" >Window</text>
<text x="132" y="36.8" font-size="12" fill="#000" font-weight="normal" text-anchor="start" textLength="25" lengthAdjust="spacingAndGlyphs" >View</text>
<text x="171.5" y="36.8" font-size="12" fill="#000" font-weight="normal" text-anchor="start" textLength="73.5" lengthAdjust="spacingAndGlyphs" >Configuration</text>
<text x="259.5" y="36.8" font-size="12" fill="#000" font-weight="normal" text-anchor="start" textLength="25" lengthAdjust="spacingAndGlyphs" >Help</text>
<rect x="2" y="41" width="1919" height="2" fill="#f0f0f0"/>
<rect x="0" y="43" width="1921" height="27" fill="#fff"/>
<rect x="4" y="44" width="63" height="24" fill="#e6e0dd"/>
<rect x="4" y="67" width="63" height="3" fill="#ff4f00"/>
<rect x="2" y="69" width="1919" height="1" fill="#ff5a10"/>
<rect x="10.5" y="48.5" width="13" height="13" rx="2" fill="none" stroke="#555" stroke-width="1"/><polygon points="17,51 20.5,53 20.5,57 17,59 13.5,57 13.5,53" fill="#ed6b21"/>
<text x="30.5" y="59.6" font-size="12" fill="#000" font-weight="normal" text-anchor="start" textLength="30" lengthAdjust="spacingAndGlyphs" >Plater</text>
<rect x="70" y="44" width="103" height="25" fill="#e3e3e3"/>
<polygon points="83.00,48.00 84.98,50.21 87.95,50.05 87.79,53.02 90.00,55.00 87.79,56.98 87.95,59.95 84.98,59.79 83.00,62.00 81.02,59.79 78.05,59.95 78.21,56.98 76.00,55.00 78.21,53.02 78.05,50.05 81.02,50.21" fill="#6e6e6e" stroke="#6e6e6e" stroke-width="0.6" stroke-linejoin="round"/><circle cx="83" cy="55" r="4.20" fill="#e3e3e3"/><circle cx="83" cy="55" r="3.08" fill="none" stroke="#ed6b21" stroke-width="1.3" stroke-dasharray="1.9 0.7"/>
<text x="96" y="59.6" font-size="12" fill="#000" font-weight="normal" text-anchor="start" textLength="70" lengthAdjust="spacingAndGlyphs" >Print Settings</text>
<rect x="176" y="44" width="124" height="25" fill="#e3e3e3"/>
<rect x="182.5" y="48.5" width="13" height="13" fill="#b8663a" stroke="#666" stroke-width="1"/>
<text x="202" y="59.6" font-size="12" fill="#000" font-weight="normal" text-anchor="start" textLength="91" lengthAdjust="spacingAndGlyphs" >Filament Settings</text>
<rect x="303" y="44" width="113" height="25" fill="#e3e3e3"/>
<rect x="309.5" y="48.5" width="13" height="12" fill="none" stroke="#777" stroke-width="1"/><path d="M309.5 52.5h13" stroke="#777"/><rect x="311" y="50" width="2.5" height="2.5" fill="#ed6b21"/>
<text x="329" y="59.6" font-size="12" fill="#000" font-weight="normal" text-anchor="start" textLength="80" lengthAdjust="spacingAndGlyphs" >Printer Settings</text>
<rect x="1715" y="44" width="60" height="23" fill="#e3e3e3"/>
<circle cx="1723.5" cy="55.5" r="4.8" fill="#6ad43a"/>
<text x="1735.5" y="59.6" font-size="12" fill="#000" font-weight="normal" text-anchor="start" textLength="35.5" lengthAdjust="spacingAndGlyphs" >Simple</text>
<rect x="1778.5" y="44" width="77.5" height="23" fill="#e3e3e3"/>
<circle cx="1787.5" cy="55.5" r="4.8" fill="#ffd100"/>
<text x="1799.5" y="59.6" font-size="12" fill="#000" font-weight="normal" text-anchor="start" textLength="51.5" lengthAdjust="spacingAndGlyphs" >Advanced</text>
<rect x="1859" y="44" width="58" height="23" fill="#e6dfdd"/>
<circle cx="1868" cy="55.5" r="4.8" fill="#e8000b"/>
<text x="1879" y="59.6" font-size="12" fill="#000" font-weight="bold" text-anchor="start" textLength="35.5" lengthAdjust="spacingAndGlyphs" >Expert</text>
<rect x="1501" y="70" width="420" height="962" fill="#fff"/>
<text x="1506" y="81.6" font-size="12" fill="#000" font-weight="normal" text-anchor="start" textLength="71.5" lengthAdjust="spacingAndGlyphs" >Print settings:</text>
<rect x="1506.5" y="87.5" width="392" height="22" fill="#fff" stroke="#6b6b6b" stroke-width="1"/>
<polygon points="1523.00,91.95 1524.95,94.13 1527.88,93.97 1527.72,96.90 1529.90,98.85 1527.72,100.80 1527.88,103.73 1524.95,103.57 1523.00,105.75 1521.05,103.57 1518.12,103.73 1518.28,100.80 1516.10,98.85 1518.28,96.90 1518.12,93.97 1521.05,94.13" fill="#7c7c7c" stroke="#7c7c7c" stroke-width="0.6" stroke-linejoin="round"/><circle cx="1523" cy="98.85" r="4.14" fill="#fff"/><circle cx="1523" cy="98.85" r="3.04" fill="none" stroke="#ed6b21" stroke-width="1.3" stroke-dasharray="1.9 0.7"/><path d="M1541.3 99.3 v-3.5 a3.7 3.2 0 0 1 7.4 0 v3.5" fill="none" stroke="#7a7a7a" stroke-width="2"/><rect x="1539.2" y="99.0" width="11.6" height="6.8" rx="1" fill="#7a7a7a"/><path d="M1543.2 102.39999999999999 l1.6 -1.3 v0.8 h2.4 v1 h-2.4 v0.8 z" fill="#fff"/>
<text x="1557.5" y="103.3" font-size="12" fill="#000" font-weight="normal" text-anchor="start" textLength="152" lengthAdjust="spacingAndGlyphs" >0.20mm QUALITY (modified)</text>
<path d="M1882 95 l6 5 l6 -5" fill="none" stroke="#333" stroke-width="1.3"/><polygon points="1910.00,91.80 1911.95,93.98 1914.88,93.82 1914.72,96.75 1916.90,98.70 1914.72,100.65 1914.88,103.58 1911.95,103.42 1910.00,105.60 1908.05,103.42 1905.12,103.58 1905.28,100.65 1903.10,98.70 1905.28,96.75 1905.12,93.82 1908.05,93.98" fill="#7c7c7c" stroke="#7c7c7c" stroke-width="0.6" stroke-linejoin="round"/><circle cx="1910" cy="98.7" r="4.14" fill="#fff"/><circle cx="1910" cy="98.7" r="3.04" fill="none" stroke="#ed6b21" stroke-width="1.3" stroke-dasharray="1.9 0.7"/>
<text x="1506" y="124.4" font-size="12" fill="#000" font-weight="normal" text-anchor="start" textLength="47" lengthAdjust="spacingAndGlyphs" >Filament:</text>
<rect x="1506.5" y="130.5" width="392" height="22" fill="#fff" stroke="#6b6b6b" stroke-width="1"/>
<rect x="1511" y="134.5" width="23.5" height="15.5" fill="#ff7f00" stroke="#555" stroke-width="0.6"/><path d="M1541.3 142.3 v-3.5 a3.7 3.2 0 0 1 7.4 0 v3.5" fill="none" stroke="#7a7a7a" stroke-width="2"/><rect x="1539.2" y="142.0" width="11.6" height="6.8" rx="1" fill="#7a7a7a"/><path d="M1543.2 145.4 l1.6 -1.3 v0.8 h2.4 v1 h-2.4 v0.8 z" fill="#fff"/>
<text x="1557.5" y="146.3" font-size="12" fill="#000" font-weight="normal" text-anchor="start" textLength="146" lengthAdjust="spacingAndGlyphs" >Prusament PETG (modified)</text>
<path d="M1882 138 l6 5 l6 -5" fill="none" stroke="#333" stroke-width="1.3"/><polygon points="1910.00,134.60 1911.95,136.78 1914.88,136.62 1914.72,139.55 1916.90,141.50 1914.72,143.45 1914.88,146.38 1911.95,146.22 1910.00,148.40 1908.05,146.22 1905.12,146.38 1905.28,143.45 1903.10,141.50 1905.28,139.55 1905.12,136.62 1908.05,136.78" fill="#7c7c7c" stroke="#7c7c7c" stroke-width="0.6" stroke-linejoin="round"/><circle cx="1910" cy="141.5" r="4.14" fill="#fff"/><circle cx="1910" cy="141.5" r="3.04" fill="none" stroke="#ed6b21" stroke-width="1.3" stroke-dasharray="1.9 0.7"/>
<text x="1506" y="167.4" font-size="12" fill="#000" font-weight="normal" text-anchor="start" textLength="38" lengthAdjust="spacingAndGlyphs" >Printer:</text>
<rect x="1506.5" y="173.5" width="392" height="22" fill="#fff" stroke="#6b6b6b" stroke-width="1"/>
<rect x="1516.5" y="178.5" width="13" height="12" fill="none" stroke="#888" stroke-width="1"/><path d="M1516.5 182.5h13" stroke="#888"/><rect x="1518.5" y="180" width="2.5" height="2.5" fill="#ed6b21"/><path d="M1541.3 185.3 v-3.5 a3.7 3.2 0 0 1 7.4 0 v3.5" fill="none" stroke="#7a7a7a" stroke-width="2"/><rect x="1539.2" y="185.0" width="11.6" height="6.8" rx="1" fill="#7a7a7a"/><path d="M1543.2 188.4 l1.6 -1.3 v0.8 h2.4 v1 h-2.4 v0.8 z" fill="#fff"/>
<text x="1557.5" y="189.3" font-size="12" fill="#000" font-weight="normal" text-anchor="start" textLength="214" lengthAdjust="spacingAndGlyphs" >Original Prusa MK4 0.4 nozzle (modified)</text>
<path d="M1882 181 l6 5 l6 -5" fill="none" stroke="#333" stroke-width="1.3"/><polygon points="1910.00,177.60 1911.95,179.78 1914.88,179.62 1914.72,182.55 1916.90,184.50 1914.72,186.45 1914.88,189.38 1911.95,189.22 1910.00,191.40 1908.05,189.22 1905.12,189.38 1905.28,186.45 1903.10,184.50 1905.28,182.55 1905.12,179.62 1908.05,179.78" fill="#7c7c7c" stroke="#7c7c7c" stroke-width="0.6" stroke-linejoin="round"/><circle cx="1910" cy="184.5" r="4.14" fill="#fff"/><circle cx="1910" cy="184.5" r="3.04" fill="none" stroke="#ed6b21" stroke-width="1.3" stroke-dasharray="1.9 0.7"/>
<text x="1507" y="220.3" font-size="12" fill="#000" font-weight="normal" text-anchor="start" textLength="49" lengthAdjust="spacingAndGlyphs" >Supports:</text>
<rect x="1560.5" y="204.5" width="338" height="22" fill="#fff" stroke="#6b6b6b" stroke-width="1"/>
<text x="1565.5" y="220.3" font-size="12" fill="#000" font-weight="normal" text-anchor="start" textLength="29" lengthAdjust="spacingAndGlyphs" >None</text>
<path d="M1882 212 l6 5 l6 -5" fill="none" stroke="#333" stroke-width="1.3"/>
<text x="1507" y="247.3" font-size="12" fill="#000" font-weight="normal" text-anchor="start" textLength="26.5" lengthAdjust="spacingAndGlyphs" >Infill:</text>
<rect x="1536.5" y="231.5" width="79" height="22" fill="#fff" stroke="#6b6b6b" stroke-width="1"/>
<text x="1544" y="247.3" font-size="12" fill="#000" font-weight="normal" text-anchor="start" textLength="22.5" lengthAdjust="spacingAndGlyphs" >15%</text>
<path d="M1599 239 l6 5 l6 -5" fill="none" stroke="#333" stroke-width="1.3"/>
<text x="1635" y="247.3" font-size="12" fill="#000" font-weight="normal" text-anchor="start" textLength="28" lengthAdjust="spacingAndGlyphs" >Brim:</text>
<rect x="1667.5" y="236.5" width="13" height="13" fill="#fff" stroke="#333" stroke-width="1"/>
<rect x="1506.5" y="261.5" width="414" height="455" fill="#fff" stroke="#828790" stroke-width="1"/>
<path d="M1706.5 264v21 M1736.5 264v21" stroke="#e5e5e5" stroke-width="1"/>
<text x="1513" y="278.2" font-size="12" fill="#000" font-weight="normal" text-anchor="start" textLength="32" lengthAdjust="spacingAndGlyphs" >Name</text>
<text x="1810" y="278.2" font-size="12" fill="#000" font-weight="normal" text-anchor="start" textLength="37" lengthAdjust="spacingAndGlyphs" >Editing</text>
<path d="M1510.5 293.5l4 4 4-4" fill="none" stroke="#333" stroke-width="1.3"/>
<text x="1526.3" y="301.3" font-size="12" fill="#000" font-weight="normal" text-anchor="start" textLength="59" lengthAdjust="spacingAndGlyphs" >Drillcase.stl</text>
<path d="M1715 297 q7 -7 14 0 q-7 7 -14 0z" fill="none" stroke="#666" stroke-width="1.3"/><circle cx="1722" cy="297" r="2" fill="#666"/>
<path d="M1825.5 293.7 h-1.3 q-1.5 0 -1.5 1.5 v6.5 q0 1.5 1.5 1.5 h5.8 q1.5 0 1.5 -1.5 v-2" fill="none" stroke="#777" stroke-width="1.1"/><circle cx="1830.5" cy="294.5" r="2.6" fill="#fff" stroke="#ed6b21" stroke-width="1.6" stroke-dasharray="1.6 0.6"/>
<defs><clipPath id="hexc"><polygon points="1542,312.8 1547.4,315.9 1547.4,322.1 1542,325.2 1536.6,322.1 1536.6,315.9"/></clipPath></defs><polygon points="1542,312.8 1547.4,315.9 1547.4,322.1 1542,325.2 1536.6,322.1 1536.6,315.9" fill="#f7c6a6" stroke="#808080" stroke-width="0.9"/><g clip-path="url(#hexc)" stroke="#ee7a3a" stroke-width="1.3"><path d="M1532 318l12 -7 M1534 322l12 -7 M1536 326l12 -7 M1532 315l14 8 M1534 311l14 8 M1536 307l14 8"/></g>
<text x="1554" y="323" font-size="12" fill="#000" font-weight="normal" text-anchor="start" textLength="23.5" lengthAdjust="spacingAndGlyphs" >Infill</text>
<path d="M1537.3 341.5 V335.4 q0 -2 2 -2 h8.6 q2 0 2 2 v8.2 q0 2 -2 2 h-6.6" fill="none" stroke="#7a7a7a" stroke-width="1.1"/><path d="M1534 345.5h6.4 M1537.2 342.3v6.4" stroke="#ed6b21" stroke-width="1.2"/>
<text x="1554" y="345.5" font-size="12" fill="#000" font-weight="normal" text-anchor="start" textLength="59" lengthAdjust="spacingAndGlyphs" >Drillcase.stl</text>
<polygon points="1827.70,334.40 1829.57,336.49 1832.37,336.33 1832.21,339.13 1834.30,341.00 1832.21,342.87 1832.37,345.67 1829.57,345.51 1827.70,347.60 1825.83,345.51 1823.03,345.67 1823.19,342.87 1821.10,341.00 1823.19,339.13 1823.03,336.33 1825.83,336.49" fill="#7c7c7c" stroke="#7c7c7c" stroke-width="0.6" stroke-linejoin="round"/><circle cx="1827.7" cy="341" r="3.96" fill="#fff"/><circle cx="1827.7" cy="341" r="2.90" fill="none" stroke="#ed6b21" stroke-width="1.3" stroke-dasharray="1.9 0.7"/>
<rect x="1507.5" y="352.5" width="411" height="20" fill="#cce8ff" stroke="#99d1ff" stroke-width="1"/>
<path d="M1537.3 363.5 V357.4 q0 -2 2 -2 h8.6 q2 0 2 2 v8.2 q0 2 -2 2 h-6.6" fill="none" stroke="#7a7a7a" stroke-width="1.1"/><path d="M1534 367.5h6.4 M1537.2 364.3v6.4" stroke="#ed6b21" stroke-width="1.2"/>
<text x="1554" y="367.5" font-size="12" fill="#fff" font-weight="normal" text-anchor="start" textLength="55" lengthAdjust="spacingAndGlyphs" >Drillbits.stl</text>
<polygon points="1827.70,356.40 1829.57,358.49 1832.37,358.33 1832.21,361.13 1834.30,363.00 1832.21,364.87 1832.37,367.67 1829.57,367.51 1827.70,369.60 1825.83,367.51 1823.03,367.67 1823.19,364.87 1821.10,363.00 1823.19,361.13 1823.03,358.33 1825.83,358.49" fill="#7c7c7c" stroke="#7c7c7c" stroke-width="0.6" stroke-linejoin="round"/><circle cx="1827.7" cy="363" r="3.96" fill="#fff"/><circle cx="1827.7" cy="363" r="2.90" fill="none" stroke="#ed6b21" stroke-width="1.3" stroke-dasharray="1.9 0.7"/>
<rect x="1506.5" y="729.5" width="414" height="174" fill="none" stroke="#dcdcdc" stroke-width="1"/>
<rect x="1514" y="722" width="108" height="14" fill="#fff"/>
<text x="1518" y="734.3" font-size="12" fill="#000" font-weight="bold" text-anchor="start" textLength="98" lengthAdjust="spacingAndGlyphs" >Part manipulation</text>
<rect x="1515.5" y="744.0" width="149" height="22" fill="#fff" stroke="#6b6b6b" stroke-width="1"/>
<text x="1520" y="759" font-size="12" fill="#000" font-weight="normal" text-anchor="start" textLength="102" lengthAdjust="spacingAndGlyphs" >World coordinates</text>
<path d="M1648 751 l6 5 l6 -5" fill="none" stroke="#333" stroke-width="1.3"/>
<text x="1683" y="758.5" font-size="12" fill="#000" font-weight="bold" text-anchor="start" textLength="8.5" lengthAdjust="spacingAndGlyphs" >X</text>
<rect x="1697.2" y="748.6" width="11.6" height="10.6" rx="1.6" fill="none" stroke="#111" stroke-width="1.9"/><path d="M1703 746.8v3.2 M1703 757.8v3.2" stroke="#999" stroke-width="1.6"/><circle cx="1703" cy="753.9" r="1" fill="#999"/>
<text x="1744" y="758.5" font-size="12" fill="#000" font-weight="bold" text-anchor="start" textLength="8.5" lengthAdjust="spacingAndGlyphs" >Y</text>
<rect x="1758.2" y="748.6" width="11.6" height="10.6" rx="1.6" fill="none" stroke="#111" stroke-width="1.9"/><path d="M1764 746.8v3.2 M1764 757.8v3.2" stroke="#999" stroke-width="1.6"/><circle cx="1764" cy="753.9" r="1" fill="#999"/>
<text x="1805" y="758.5" font-size="12" fill="#000" font-weight="bold" text-anchor="start" textLength="8.5" lengthAdjust="spacingAndGlyphs" >Z</text>
<rect x="1819.2" y="748.6" width="11.6" height="10.6" rx="1.6" fill="none" stroke="#111" stroke-width="1.9"/><path d="M1825 746.8v3.2 M1825 757.8v3.2" stroke="#999" stroke-width="1.6"/><circle cx="1825" cy="753.9" r="1" fill="#999"/>
<text x="1515" y="785.3" font-size="12" fill="#000" font-weight="normal" text-anchor="start" >Position:</text>
<rect x="1668.5" y="769.8" width="57" height="21.5" fill="#fff" stroke="#6b6b6b" stroke-width="1"/>
<text x="1675.5" y="785.3" font-size="12" fill="#000" font-weight="normal" text-anchor="start" >123.15</text>
<rect x="1729.5" y="769.8" width="57" height="21.5" fill="#fff" stroke="#6b6b6b" stroke-width="1"/>
<text x="1736.5" y="785.3" font-size="12" fill="#000" font-weight="normal" text-anchor="start" >121.89</text>
<rect x="1790.5" y="769.8" width="57" height="21.5" fill="#fff" stroke="#6b6b6b" stroke-width="1"/>
<text x="1797.5" y="785.3" font-size="12" fill="#000" font-weight="normal" text-anchor="start" >64.5</text>
<text x="1851" y="784.8" font-size="12" fill="#000" font-weight="normal" text-anchor="start" >mm</text>
<text x="1515" y="811.7" font-size="12" fill="#000" font-weight="normal" text-anchor="start" >Rotate (relative):</text>
<rect x="1668.5" y="796.2" width="57" height="21.5" fill="#fff" stroke="#6b6b6b" stroke-width="1"/>
<text x="1675.5" y="811.7" font-size="12" fill="#000" font-weight="normal" text-anchor="start" >0</text>
<rect x="1729.5" y="796.2" width="57" height="21.5" fill="#fff" stroke="#6b6b6b" stroke-width="1"/>
<text x="1736.5" y="811.7" font-size="12" fill="#000" font-weight="normal" text-anchor="start" >0</text>
<rect x="1790.5" y="796.2" width="57" height="21.5" fill="#fff" stroke="#6b6b6b" stroke-width="1"/>
<text x="1797.5" y="811.7" font-size="12" fill="#000" font-weight="normal" text-anchor="start" >0</text>
<text x="1851" y="808.7" font-size="12" fill="#000" font-weight="normal" text-anchor="start" >°</text>
<text x="1535" y="837.9" font-size="12" fill="#000" font-weight="normal" text-anchor="start" >Scale:</text>
<rect x="1668.5" y="822.4" width="57" height="21.5" fill="#fff" stroke="#6b6b6b" stroke-width="1"/>
<text x="1675.5" y="837.9" font-size="12" fill="#000" font-weight="normal" text-anchor="start" >100</text>
<rect x="1729.5" y="822.4" width="57" height="21.5" fill="#fff" stroke="#6b6b6b" stroke-width="1"/>
<text x="1736.5" y="837.9" font-size="12" fill="#000" font-weight="normal" text-anchor="start" >100</text>
<rect x="1790.5" y="822.4" width="57" height="21.5" fill="#fff" stroke="#6b6b6b" stroke-width="1"/>
<text x="1797.5" y="837.9" font-size="12" fill="#000" font-weight="normal" text-anchor="start" >100</text>
<text x="1851" y="837.4" font-size="12" fill="#000" font-weight="normal" text-anchor="start" >%</text>
<text x="1535" y="864" font-size="12" fill="#000" font-weight="normal" text-anchor="start" >Size [World]:</text>
<rect x="1668.5" y="848.5" width="57" height="21.5" fill="#fff" stroke="#6b6b6b" stroke-width="1"/>
<text x="1675.5" y="864" font-size="12" fill="#000" font-weight="normal" text-anchor="start" >50</text>
<rect x="1729.5" y="848.5" width="57" height="21.5" fill="#fff" stroke="#6b6b6b" stroke-width="1"/>
<text x="1736.5" y="864" font-size="12" fill="#000" font-weight="normal" text-anchor="start" >50</text>
<rect x="1790.5" y="848.5" width="57" height="21.5" fill="#fff" stroke="#6b6b6b" stroke-width="1"/>
<text x="1797.5" y="864" font-size="12" fill="#000" font-weight="normal" text-anchor="start" >121</text>
<text x="1851" y="863.5" font-size="12" fill="#000" font-weight="normal" text-anchor="start" >mm</text>
<path d="M1878 786.5h13" stroke="#ed6b21" stroke-width="1.6"/><rect x="1880.5" y="778.5" width="7" height="7" fill="none" stroke="#888" stroke-width="1"/><circle cx="1889" cy="777" r="2" fill="#888"/>
<path d="M1518.8 847.0 v-3.5 a3.7 3.2 0 0 1 7.4 0 v3.5" fill="none" stroke="#7a7a7a" stroke-width="2"/><rect x="1516.7" y="846.7" width="11.6" height="6.8" rx="1" fill="#7a7a7a"/><path d="M1520.7 850.1 l1.6 -1.3 v0.8 h2.4 v1 h-2.4 v0.8 z" fill="#fff"/>
<rect x="1520.5" y="879.5" width="13" height="13" fill="#fff" stroke="#333" stroke-width="1"/>
<text x="1539" y="890.3" font-size="12" fill="#000" font-weight="normal" text-anchor="start" textLength="34" lengthAdjust="spacingAndGlyphs" >Inches</text>
<rect x="1506.5" y="918.5" width="414" height="69" fill="none" stroke="#dcdcdc" stroke-width="1"/>
<rect x="1512" y="911" width="30" height="14" fill="#fff"/>
<text x="1515" y="923" font-size="12" fill="#000" font-weight="bold" text-anchor="start" textLength="24" lengthAdjust="spacingAndGlyphs" >Info</text>
<text x="1511.3" y="940" font-size="12" fill="#000" font-weight="normal" text-anchor="start" >Size:</text>
<text x="1562.2" y="940" font-size="12" fill="#000" font-weight="normal" text-anchor="start" textLength="111" lengthAdjust="spacingAndGlyphs" >50.00 x 50.00 x 121.00</text>
<text x="1687.6" y="940" font-size="12" fill="#000" font-weight="normal" text-anchor="start" textLength="43" lengthAdjust="spacingAndGlyphs" >Volume:</text>
<text x="1747" y="940" font-size="12" fill="#000" font-weight="normal" text-anchor="start" textLength="51" lengthAdjust="spacingAndGlyphs" >157849.67</text>
<text x="1511.3" y="961" font-size="12" fill="#000" font-weight="normal" text-anchor="start" textLength="35" lengthAdjust="spacingAndGlyphs" >Facets:</text>
<text x="1562.2" y="961" font-size="12" fill="#000" font-weight="normal" text-anchor="start" textLength="73" lengthAdjust="spacingAndGlyphs" >77600 (1 shell)</text>
<text x="1513.5" y="981" font-size="12" fill="#000" font-weight="normal" text-anchor="start" textLength="97" lengthAdjust="spacingAndGlyphs" >No errors detected</text>
<rect x="1506" y="995" width="415" height="32" fill="#e1e1e1"/>
<text x="1713" y="1015" font-size="12.5" fill="#000" font-weight="bold" text-anchor="middle" textLength="56" lengthAdjust="spacingAndGlyphs" >Slice now</text>
<rect x="0" y="1032" width="1921" height="1" fill="#0b2850"/>
<rect x="0" y="0" width="1" height="1032" fill="#111"/>
</svg></body></html>
